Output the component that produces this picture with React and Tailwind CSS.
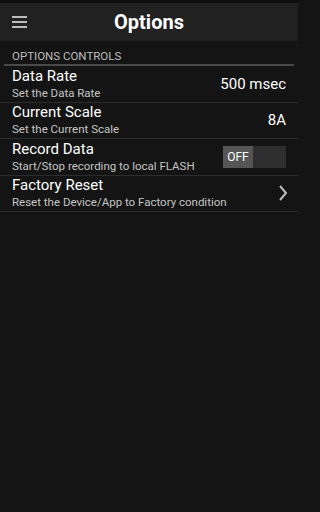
import React from 'react';

const Row = ({ title, subtitle, children }) => (
  <div className="flex items-center justify-between border-b border-[#2c2c2c] pl-[12px] pr-[12px] h-[36.5px]">
    <div className="flex flex-col">
      <div className="text-[15px] leading-[19px] text-white">{title}</div>
      <div className="text-[11.5px] leading-[15px] text-[#c4c4c4]">{subtitle}</div>
    </div>
    {children}
  </div>
);

const App = () => {
  return (
    <div
      className="w-full min-h-screen bg-[#141414]"
      style={{ fontFamily: 'Roboto, "Noto Sans", sans-serif' }}
    >
      <div className="w-[298px] h-[512px] flex flex-col">
        <div className="h-[3px] bg-[#0e0e0e]" />
        <div className="h-[38px] bg-[#212121] flex items-center">
          <div className="pl-[12px] flex flex-col gap-[3px]">
            <span className="block w-[15px] h-[2px] bg-[#bdbdbd]" />
            <span className="block w-[15px] h-[2px] bg-[#bdbdbd]" />
            <span className="block w-[15px] h-[2px] bg-[#bdbdbd]" />
          </div>
          <div className="flex-1 text-center text-white font-bold text-[20px] pr-[27px]">Options</div>
        </div>
        <div className="pt-[9px] px-[12px] text-[11.5px] leading-[13px] text-[#bdbdbd] pb-[1px]">
          OPTIONS CONTROLS
        </div>
        <div className="mx-[4px] h-[2px] bg-[#4a4a4a]" />
        <Row title="Data Rate" subtitle="Set the Data Rate">
          <div className="text-[15px] text-white">500 msec</div>
        </Row>
        <Row title="Current Scale" subtitle="Set the Current Scale">
          <div className="text-[15px] text-white">8A</div>
        </Row>
        <Row title="Record Data" subtitle="Start/Stop recording to local FLASH">
          <div className="w-[63px] h-[22px] bg-[#2e2e2e] flex">
            <div className="w-[30px] h-full bg-[#555555] flex items-center justify-center text-[12px] text-white">
              OFF
            </div>
          </div>
        </Row>
        <Row title="Factory Reset" subtitle="Reset the Device/App to Factory condition">
          <svg width="10" height="18" viewBox="0 0 10 18" className="mr-[-2px]">
            <path d="M2 2 L8 9 L2 16" fill="none" stroke="#bdbdbd" strokeWidth="2" />
          </svg>
        </Row>
      </div>
    </div>
  );
};

export default App;
